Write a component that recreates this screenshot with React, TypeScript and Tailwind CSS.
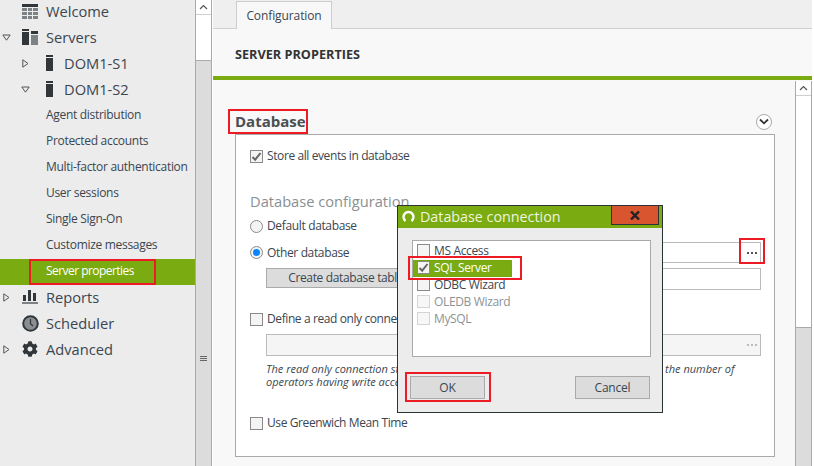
import type { ReactNode } from "react";
import { FaCog } from "react-icons/fa";

const DARK = "#30363a";
const GREY = "#7d8285";

function Arrow({ open }: { open?: boolean }) {
  return (
    <svg width="9" height="9" viewBox="0 0 9 9" className="block">
      {open ? (
        <path d="M0.8 2 H8.2 L4.5 7.2 Z" fill="none" stroke="#555" strokeWidth="1" />
      ) : (
        <path d="M1.8 0.8 V8.2 L7 4.5 Z" fill="none" stroke="#555" strokeWidth="1" />
      )}
    </svg>
  );
}

function WelcomeIcon() {
  return (
    <svg width="16" height="15" viewBox="0 0 16 15" className="block">
      <rect width="16" height="3" fill={DARK} />
      <rect y="4" width="5" height="3" fill={GREY} />
      <rect x="6" y="4" width="4" height="3" fill={GREY} />
      <rect x="11" y="4" width="5" height="3" fill={GREY} />
      <rect y="8" width="5" height="3" fill={GREY} />
      <rect x="6" y="8" width="4" height="3" fill={GREY} />
      <rect x="11" y="8" width="5" height="3" fill={GREY} />
      <rect y="12" width="5" height="3" fill={GREY} />
      <rect x="6" y="12" width="4" height="3" fill={GREY} />
      <rect x="11" y="12" width="5" height="3" fill={GREY} />
    </svg>
  );
}

function ServersIcon() {
  return (
    <svg width="16" height="16" viewBox="0 0 16 16" className="block">
      <rect width="7" height="2" fill={DARK} />
      <rect y="3" width="7" height="13" fill={DARK} />
      <rect x="9" y="2" width="7" height="3" fill={DARK} />
      <rect x="9" y="6" width="7" height="10" fill={GREY} />
    </svg>
  );
}

function ServerIcon() {
  return (
    <svg width="7" height="16" viewBox="0 0 7 16" className="block">
      <rect width="7" height="2" fill={DARK} />
      <rect y="3" width="7" height="13" fill={DARK} />
    </svg>
  );
}

function ReportsIcon() {
  return (
    <svg width="16" height="14" viewBox="0 0 16 14" className="block">
      <rect x="1" y="5" width="3" height="6" fill={DARK} />
      <rect x="6" y="0" width="3" height="11" fill={DARK} />
      <rect x="11" y="3" width="3" height="8" fill={DARK} />
      <rect y="12" width="16" height="2" fill={GREY} />
    </svg>
  );
}

function ClockIcon() {
  return (
    <svg width="17" height="17" viewBox="0 0 17 17" className="block">
      <circle cx="8.5" cy="8.5" r="7.3" fill="#8a8e91" stroke={DARK} strokeWidth="2" />
      <path d="M8.5 4 V8.7 L11 11" fill="none" stroke={DARK} strokeWidth="1.2" />
    </svg>
  );
}

function TreeRow({
  arrow,
  icon,
  label,
  nested,
}: {
  arrow?: "open" | "closed";
  icon: ReactNode;
  label: string;
  nested?: boolean;
}) {
  return (
    <div className="flex h-[26px] items-center pb-[2px] text-[14.67px] text-[#3a4650]">
      <div className={nested ? "w-[46px] pl-[21px]" : "w-[22px] pl-[2px]"}>
        {arrow && <Arrow open={arrow === "open"} />}
      </div>
      <div className={nested ? "flex w-[18px]" : "flex w-[24px]"}>{icon}</div>
      <span>{label}</span>
    </div>
  );
}

function SubRow({ label }: { label: string }) {
  return (
    <div className="flex h-[26px] items-center pb-[2px] pl-[46px] text-[12px] tracking-[-0.3px] whitespace-nowrap text-[#3a4650]">
      {label}
    </div>
  );
}

function Sidebar() {
  return (
    <div className="h-full w-[195px] shrink-0 overflow-hidden bg-[#ececec]">
      <div className="-mt-px">
        <TreeRow icon={<WelcomeIcon />} label="Welcome" />
        <TreeRow arrow="open" icon={<ServersIcon />} label="Servers" />
        <TreeRow nested arrow="closed" icon={<ServerIcon />} label="DOM1-S1" />
        <TreeRow nested arrow="open" icon={<ServerIcon />} label="DOM1-S2" />
        <SubRow label="Agent distribution" />
        <SubRow label="Protected accounts" />
        <SubRow label="Multi-factor authentication" />
        <SubRow label="User sessions" />
        <SubRow label="Single Sign-On" />
        <SubRow label="Customize messages" />
        <div className="relative flex h-[26px] items-center bg-[#7aab11] pb-[2px] pl-[46px] text-[12px] tracking-[-0.55px] text-white">
          Server properties
          <div className="absolute top-0 left-[29px] h-[26px] w-[127px] border-2 border-[#ed1c24]" />
        </div>
        <TreeRow arrow="closed" icon={<ReportsIcon />} label="Reports" />
        <TreeRow icon={<ClockIcon />} label="Scheduler" />
        <TreeRow arrow="closed" icon={<FaCog size={16} color={DARK} />} label="Advanced" />
      </div>
    </div>
  );
}

function ScrollUp() {
  return (
    <div className="flex h-[15px] items-center justify-center border-b border-[#cfcfcf] bg-white">
      <svg width="9" height="6" viewBox="0 0 9 6">
        <path d="M1 5 L4.5 1.5 L8 5" fill="none" stroke="#555" strokeWidth="1.2" />
      </svg>
    </div>
  );
}

function SidebarScroll() {
  return (
    <div className="flex h-full w-[17px] shrink-0 flex-col border-x border-[#aaaaaa] bg-[#dcdcdc]">
      <ScrollUp />
      <div className="h-[46px] border-b border-[#aaaaaa] bg-white" />
      <div className="mt-[295px] flex flex-col gap-px self-center">
        <div className="h-px w-[7px] bg-[#666]" />
        <div className="h-px w-[7px] bg-[#666]" />
        <div className="h-px w-[7px] bg-[#666]" />
      </div>
    </div>
  );
}

function Check({ checked, faded }: { checked?: boolean; faded?: boolean }) {
  return (
    <div
      className={`flex h-[13px] w-[13px] shrink-0 items-center justify-center border ${
        faded ? "border-[#d4d4d4] bg-[#f7f7f7]" : "border-[#8a8a8a] bg-[#f4f4f4]"
      }`}
    >
      {checked && (
        <svg width="11" height="11" viewBox="0 0 11 11">
          <path d="M1.5 6 L4.2 8.7 L9.5 2" fill="none" stroke="#666" strokeWidth="2" />
        </svg>
      )}
    </div>
  );
}

function CheckRow({ label, checked }: { label: string; checked?: boolean }) {
  return (
    <div className="flex h-[20px] items-center gap-[4px] text-[12px] tracking-[-0.4px] text-[#3a4650]">
      <Check checked={checked} />
      <span>{label}</span>
    </div>
  );
}

function Radio({ on }: { on?: boolean }) {
  return (
    <div className="flex h-[13px] w-[13px] shrink-0 items-center justify-center rounded-full border border-[#8a8a8a] bg-[#f4f4f4]">
      {on && <div className="h-[7px] w-[7px] rounded-full bg-[#0a84ff]" />}
    </div>
  );
}

function Dots({ color }: { color: string }) {
  return (
    <div className="flex gap-[2px]">
      <div className={`h-[2px] w-[2px] ${color}`} />
      <div className={`h-[2px] w-[2px] ${color}`} />
      <div className={`h-[2px] w-[2px] ${color}`} />
    </div>
  );
}

function DatabaseBox() {
  return (
    <div className="h-[323px] w-[540px] border border-[#aaaaaa] bg-white pt-[11px] pr-[13px] pl-[14px]">
      <CheckRow checked label="Store all events in database" />
      <div className="mt-[25px] flex h-[20px] items-center text-[14.67px] text-[#8a8f92]">Database configuration</div>
      <div className="mt-[5px] flex h-[20px] items-center gap-[4px] text-[12px] tracking-[-0.35px] text-[#3a4650]">
        <Radio />
        <span>Default database</span>
      </div>
      <div className="mt-[6px] flex h-[21px] items-center gap-[4px] text-[12px] tracking-[-0.35px] text-[#3a4650]">
        <Radio on />
        <span>Other database</span>
        <div className="relative ml-auto flex h-[21px] w-[330px] items-center justify-end border border-[#bbbbbb] bg-white pr-[3px]">
          <Dots color="bg-[#555555]" />
          <div className="absolute -top-[5px] -right-[5px] h-[26px] w-[26px] border-2 border-[#ed1c24]" />
        </div>
      </div>
      <div className="mt-[5px] ml-[16px] flex items-start gap-[10px]">
        <div className="flex h-[20px] w-[165px] items-center justify-center border border-[#aaaaaa] bg-[#dcdcdc] text-[12px] tracking-[-0.35px] text-[#3a4650]">
          Create database tables
        </div>
        <div className="h-[22px] flex-1 border border-[#bbbbbb] bg-white" />
      </div>
      <div className="mt-[19px]">
        <CheckRow label="Define a read only connection string" />
      </div>
      <div className="mt-[5px] ml-[16px] flex h-[22px] items-center justify-end border border-[#bbbbbb] bg-[#f5f5f5] pr-[3px]">
        <Dots color="bg-[#bbbbbb]" />
      </div>
      <p className="mt-[6px] ml-[16px] text-[11px] leading-[13px] text-[#3a4650] italic">
        The read only connection string is used for reporting queries only, in order to limit the number of
        <br />
        operators having write access to the database.
      </p>
      <div className="mt-[25px]">
        <CheckRow label="Use Greenwich Mean Time" />
      </div>
    </div>
  );
}

function ListItem({ label, checked, faded }: { label: string; checked?: boolean; faded?: boolean }) {
  return (
    <div
      className={`flex h-[17px] items-center gap-[4px] pl-[4px] text-[12px] tracking-[-0.35px] ${
        faded ? "text-[#8d9296]" : "text-[#3a4650]"
      }`}
    >
      <Check checked={checked} faded={faded} />
      <span>{label}</span>
    </div>
  );
}

function DialogButton({ label }: { label: string }) {
  return (
    <div className="flex h-[23px] w-[75px] items-center justify-center border border-[#aaaaaa] bg-[#dcdcdc] text-[12px] tracking-[-0.2px] text-[#3a4650]">
      {label}
    </div>
  );
}

function ConnectionDialog() {
  return (
    <div className="absolute top-[205px] left-[397px] h-[208px] w-[266px] border border-[#2b3335] bg-[#ececec]">
      <div className="flex h-[22px] items-start bg-[#7aab11] pl-[4px]">
        <svg width="13" height="13" viewBox="0 0 13 13" className="mt-[4px] shrink-0">
          <path d="M3.5 11 A5 5 0 1 1 9.5 11" fill="none" stroke="white" strokeWidth="2.4" />
        </svg>
        <span className="mt-px ml-[5px] text-[14.3px] leading-[20px] text-[#eef4df]">Database connection</span>
        <div className="mr-[3px] ml-auto flex h-[19px] w-[48px] items-center justify-center border border-t-0 border-[#2b3335] bg-[#d9552f]">
          <svg width="10" height="9" viewBox="0 0 10 9">
            <path d="M1 0.5 L9 8.5 M9 0.5 L1 8.5" stroke="#222" strokeWidth="2.4" />
          </svg>
        </div>
      </div>
      <div className="mt-[12px] ml-[14px] h-[117px] w-[239px] border border-[#aaaaaa] bg-white pt-[1px]">
        <ListItem label="MS Access" />
        <div className="relative">
          <div className="absolute top-[1px] left-0 h-[17px] w-[99px] border border-dotted border-[#6f7fc0] bg-[#7aab11]" />
          <div className="relative flex h-[17px] items-center gap-[4px] pl-[4px] text-[12px] tracking-[-0.35px] text-white">
            <Check checked />
            <span>SQL Server</span>
          </div>
          <div className="absolute -top-[3px] -left-[5px] h-[24px] w-[114px] border-2 border-[#ed1c24]" />
        </div>
        <ListItem label="ODBC Wizard" />
        <ListItem faded label="OLEDB Wizard" />
        <ListItem faded label="MySQL" />
      </div>
      <div className="mt-[19px] flex justify-between pr-[12px] pl-[12px]">
        <div className="relative">
          <DialogButton label="OK" />
          <div className="absolute -top-[4px] -left-[5px] h-[30px] w-[86px] border-2 border-[#ed1c24]" />
        </div>
        <DialogButton label="Cancel" />
      </div>
    </div>
  );
}

function Main() {
  return (
    <div className="ml-px flex h-full w-[599px] flex-col bg-[#f8f8f8]">
      <div className="flex h-[29px] shrink-0 border-b border-[#d0d0d0] bg-[#efefef] pl-[23px]">
        <div className="mt-px -mb-px flex h-[28px] w-[96px] items-center justify-center border border-b-0 border-[#cccccc] bg-[#f8f8f8] text-[12px] tracking-[-0.1px] text-[#3a4650]">
          Configuration
        </div>
      </div>
      <div className="flex h-[47px] shrink-0 items-center pt-[5px] pl-[22px] text-[12.7px] font-bold text-[#333]">
        SERVER PROPERTIES
      </div>
      <div className="h-[4px] shrink-0 bg-[#7aab11]" />
      <div className="flex min-h-0 flex-1">
        <div className="flex-1 pl-[22px]">
          <div className="mt-[29px] flex h-[25px] w-[540px] items-center justify-between">
            <div className="relative text-[15px] font-bold text-[#4a4f53]">
              Database
              <div className="absolute top-[-1px] -left-[7px] h-[25px] w-[80px] border-2 border-[#ed1c24]" />
            </div>
            <div className="mr-[3px] flex h-[16px] w-[16px] items-center justify-center rounded-full border border-[#aaaaaa] bg-white">
              <svg width="10" height="7" viewBox="0 0 10 7">
                <path d="M1 1.5 L5 5.3 L9 1.5" fill="none" stroke="#333" strokeWidth="1.8" />
              </svg>
            </div>
          </div>
          <DatabaseBox />
        </div>
        <div className="mt-px flex w-[17px] shrink-0 flex-col border-x border-[#aaaaaa] bg-[#dcdcdc]">
          <ScrollUp />
          <div className="h-[232px] border-b border-[#aaaaaa] bg-white" />
        </div>
      </div>
    </div>
  );
}

export default function App() {
  return (
    <div className="relative flex h-[466px] w-[814px] overflow-hidden bg-white font-['Open_Sans',sans-serif]">
      <Sidebar />
      <SidebarScroll />
      <Main />
      <ConnectionDialog />
    </div>
  );
}
